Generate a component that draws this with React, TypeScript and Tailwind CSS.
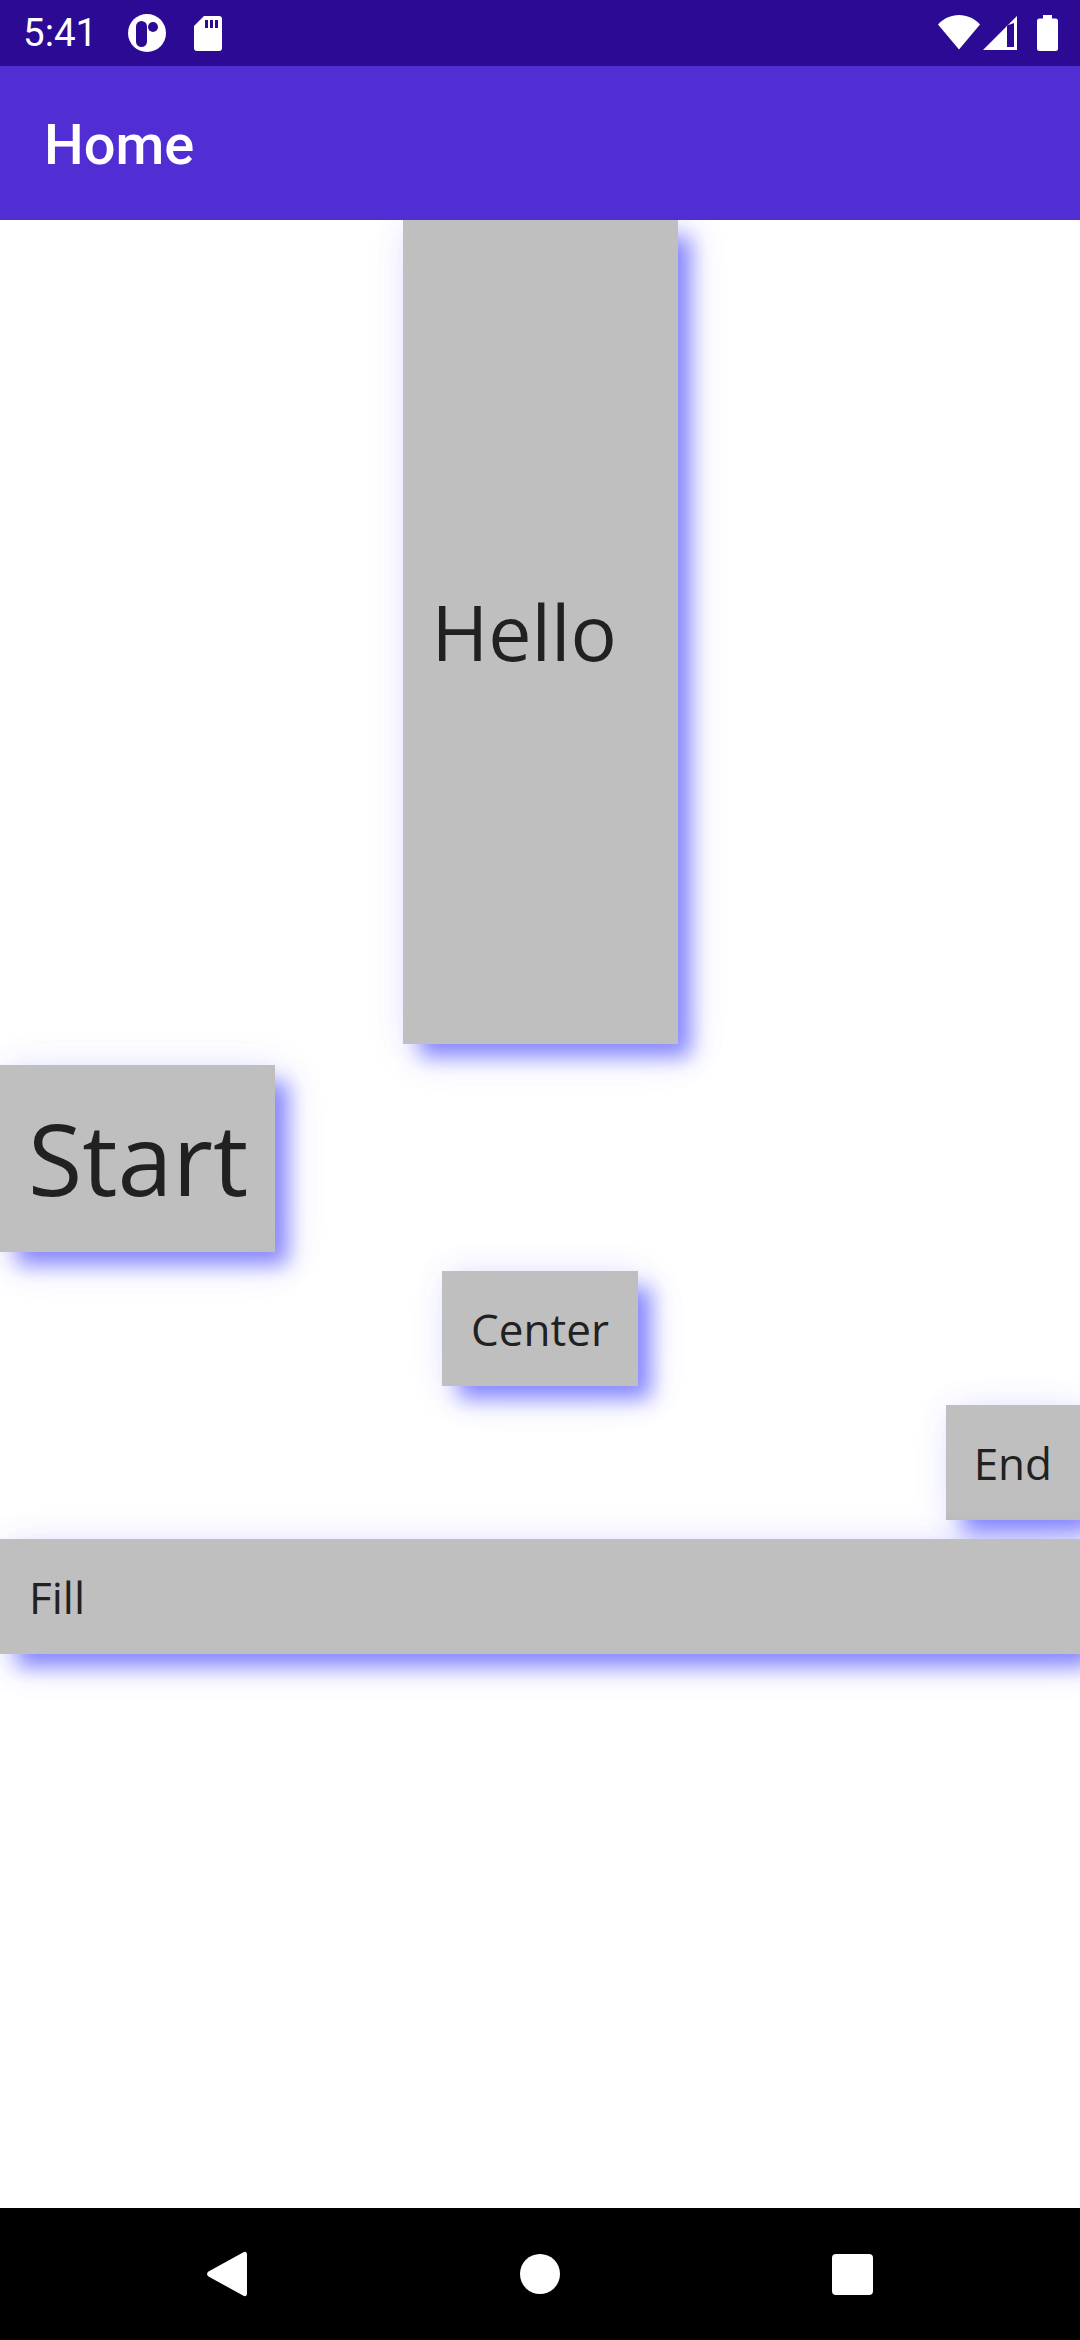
const boxShadow =
  'bg-[#bfbfbf] text-[#212121] shadow-[15px_15px_20px_-2px_rgba(50,50,255,0.55),8px_8px_44px_rgba(100,100,255,0.1),0_0_30px_rgba(90,90,255,0.07)]';
const openSans = 'font-["Open_Sans",sans-serif]';

const StatusIcons = () => (
  <div className="flex items-center">
    <svg width="42" height="36" viewBox="0 0 42 36">
      <path d="M0 9.500C5.500 3.500 13 0 21 0s15.500 3.500 21 9.500L21 34.500z" fill="#fff" />
    </svg>
    <svg width="34" height="35" viewBox="0 0 34 35" className="ml-[3px]">
      <path fillRule="evenodd" d="M34 0v34H0zM24 9.500 24 31H31V7z" fill="#fff" />
      <path d="M23 31h1V10l-1 1z" fill="#fff" />
    </svg>
    <svg width="21" height="36" viewBox="0 0 21 36" className="ml-[20px]">
      <path d="M6 0h9v3.500h3.500A2.500 2.500 0 0 1 21 6v27.500a2.500 2.500 0 0 1-2.500 2.500h-16A2.500 2.500 0 0 1 0 33.500V6a2.500 2.500 0 0 1 2.500-2.500H6z" fill="#fff" />
    </svg>
  </div>
);

const App = () => {
  return (
    <div className="w-[1080px] h-[2340px] flex flex-col bg-white overflow-hidden">
      {/* Status bar */}
      <div className="h-[66px] shrink-0 bg-[#2c0a94] flex items-center justify-between pl-[23px] pr-[22px] text-white">
        <div className="flex items-center">
          <span className='font-["Roboto",sans-serif] text-[38.500px] leading-none'>5:41</span>
          <svg width="38" height="38" viewBox="0 0 38 38" className="ml-[31px]">
            <circle cx="19" cy="19" r="19" fill="#fff" />
            <rect x="8" y="7" width="11" height="26" rx="5.500" fill="#2c0a94" />
            <circle cx="25" cy="13" r="5" fill="#2c0a94" />
          </svg>
          <svg width="28" height="35" viewBox="0 0 28 35" className="ml-[28px]">
            <path d="M10 0h15a3 3 0 0 1 3 3v29a3 3 0 0 1-3 3H3a3 3 0 0 1-3-3V10z" fill="#fff" />
            <path d="M11 4h3v8h-3zM16 4h3v8h-3zM21 4h3v8h-3z" fill="#2c0a94" />
          </svg>
        </div>
        <StatusIcons />
      </div>

      {/* App bar */}
      <div className="h-[154px] shrink-0 bg-[#512dd4] relative z-10 flex items-center pl-[44px] pt-[4px]">
        <span className='font-["Roboto",sans-serif] font-medium text-[56px] leading-none text-white'>Home</span>
      </div>

      {/* Content */}
      <div className="flex-1 flex flex-col gap-[19px] min-h-0">
        <div className={`${boxShadow} ${openSans} w-[275px] h-[824px] self-center flex items-center pl-[29px] text-[77px]`}>
          Hello
        </div>
        <div className={`${boxShadow} ${openSans} w-[275px] h-[187px] flex items-center pl-[28px] text-[99px] mt-[2px]`}>
          Start
        </div>
        <div className={`${boxShadow} ${openSans} h-[115px] self-center flex items-center px-[29px] text-[44px]`}>
          Center
        </div>
        <div className={`${boxShadow} ${openSans} h-[115px] self-end flex items-center px-[28px] text-[44px]`}>
          End
        </div>
        <div className={`${boxShadow} ${openSans} h-[115px] flex items-center px-[29px] text-[44px]`}>
          Fill
        </div>
      </div>

      {/* Navigation bar */}
      <div className="h-[132px] shrink-0 bg-black relative flex items-center justify-center">
        <div className="flex items-center w-[666px] justify-between">
          <svg width="40" height="46" viewBox="0 0 40 46">
            <path d="M36 1.500c2-1.500 4-.5 4 2v39c0 2.500-2 3.500-4 2L1.500 25.500c-2-1.500-2-3.500 0-5z" fill="#fff" />
          </svg>
          <div className="w-[40px] h-[40px] rounded-full bg-white" />
          <div className="w-[41px] h-[41px] rounded-[4px] bg-white" />
        </div>
      </div>
    </div>
  );
};

export default App;
